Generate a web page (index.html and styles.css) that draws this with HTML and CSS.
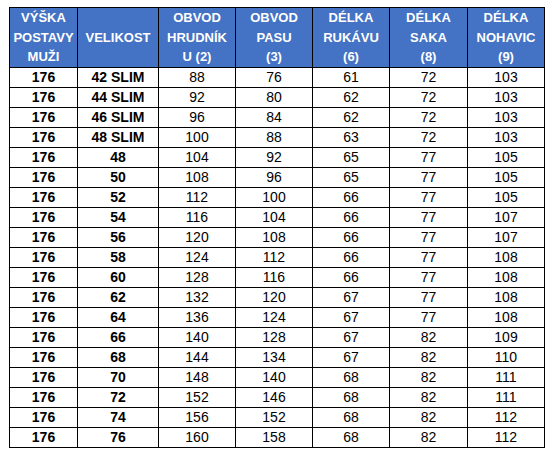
FILE: index.html
```html
<!DOCTYPE html>
<html lang="cs">
<head>
<meta charset="utf-8">
<link rel="stylesheet" href="styles.css">
</head>
<body>
<table class="sizes">
<colgroup>
<col class="c1"><col class="c2"><col class="c3"><col class="c4"><col class="c5"><col class="c6"><col class="c7">
</colgroup>
<thead>
<tr>
<th>VÝŠKA<br>POSTAVY<br>MUŽI</th>
<th>VELIKOST</th>
<th>OBVOD<br>HRUDNÍK<br>U (2)</th>
<th>OBVOD<br>PASU<br>(3)</th>
<th>DÉLKA<br>RUKÁVU<br>(6)</th>
<th>DÉLKA<br>SAKA<br>(8)</th>
<th>DÉLKA<br>NOHAVIC<br>(9)</th>
</tr>
</thead>
<tbody>
<tr><td class="b">176</td><td class="b">42 SLIM</td><td>88</td><td>76</td><td>61</td><td>72</td><td>103</td></tr>
<tr><td class="b">176</td><td class="b">44 SLIM</td><td>92</td><td>80</td><td>62</td><td>72</td><td>103</td></tr>
<tr><td class="b">176</td><td class="b">46 SLIM</td><td>96</td><td>84</td><td>62</td><td>72</td><td>103</td></tr>
<tr><td class="b">176</td><td class="b">48 SLIM</td><td>100</td><td>88</td><td>63</td><td>72</td><td>103</td></tr>
<tr><td class="b">176</td><td class="b">48</td><td>104</td><td>92</td><td>65</td><td>77</td><td>105</td></tr>
<tr><td class="b">176</td><td class="b">50</td><td>108</td><td>96</td><td>65</td><td>77</td><td>105</td></tr>
<tr><td class="b">176</td><td class="b">52</td><td>112</td><td>100</td><td>66</td><td>77</td><td>105</td></tr>
<tr><td class="b">176</td><td class="b">54</td><td>116</td><td>104</td><td>66</td><td>77</td><td>107</td></tr>
<tr><td class="b">176</td><td class="b">56</td><td>120</td><td>108</td><td>66</td><td>77</td><td>107</td></tr>
<tr><td class="b">176</td><td class="b">58</td><td>124</td><td>112</td><td>66</td><td>77</td><td>108</td></tr>
<tr><td class="b">176</td><td class="b">60</td><td>128</td><td>116</td><td>66</td><td>77</td><td>108</td></tr>
<tr><td class="b">176</td><td class="b">62</td><td>132</td><td>120</td><td>67</td><td>77</td><td>108</td></tr>
<tr><td class="b">176</td><td class="b">64</td><td>136</td><td>124</td><td>67</td><td>77</td><td>108</td></tr>
<tr><td class="b">176</td><td class="b">66</td><td>140</td><td>128</td><td>67</td><td>82</td><td>109</td></tr>
<tr><td class="b">176</td><td class="b">68</td><td>144</td><td>134</td><td>67</td><td>82</td><td>110</td></tr>
<tr><td class="b">176</td><td class="b">70</td><td>148</td><td>140</td><td>68</td><td>82</td><td>111</td></tr>
<tr><td class="b">176</td><td class="b">72</td><td>152</td><td>146</td><td>68</td><td>82</td><td>111</td></tr>
<tr><td class="b">176</td><td class="b">74</td><td>156</td><td>152</td><td>68</td><td>82</td><td>112</td></tr>
<tr><td class="b">176</td><td class="b">76</td><td>160</td><td>158</td><td>68</td><td>82</td><td>112</td></tr>
</tbody>
</table>
</body>
</html>
```
FILE: styles.css
```css
html, body {
  margin: 0;
  padding: 0;
  background: #ffffff;
}
body {
  padding: 7px 0 0 9px;
  font-family: "Liberation Sans", Arial, sans-serif;
}
.sizes {
  border-collapse: collapse;
  table-layout: fixed;
  width: 535px;
}
.c1 { width: 68px; }
.c2 { width: 81px; }
.c3 { width: 77px; }
.c4 { width: 77px; }
.c5 { width: 77px; }
.c6 { width: 78px; }
.c7 { width: 77px; }
.sizes th,
.sizes td {
  border: 1px solid #000000;
  padding: 0;
  text-align: center;
  vertical-align: middle;
}
.sizes th {
  background: #4472c4;
  color: #ffffff;
  font-weight: bold;
  font-size: 13px;
  line-height: 19.5px;
  height: 59px;
}
.sizes td {
  color: #000000;
  font-size: 14px;
  line-height: 19px;
  height: 19px;
}
.sizes td.b {
  font-weight: bold;
}
```
